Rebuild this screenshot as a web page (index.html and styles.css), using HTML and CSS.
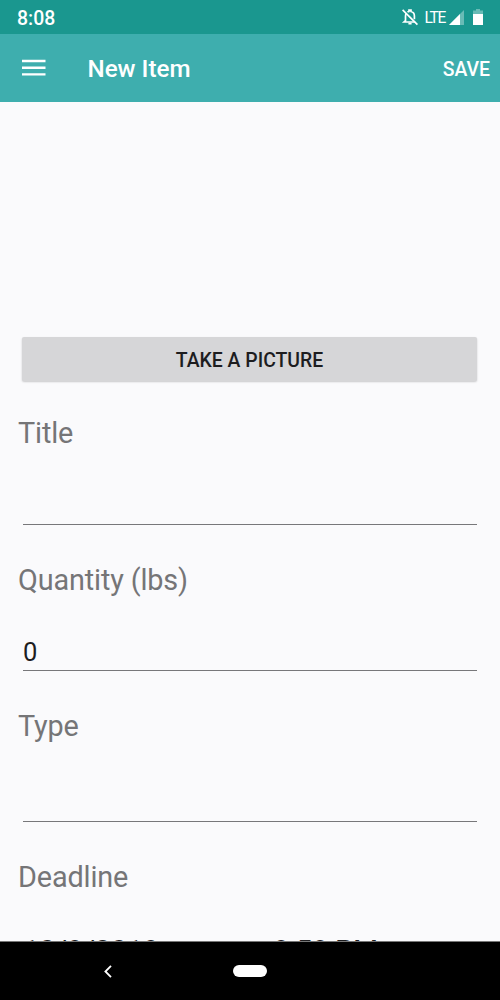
FILE: index.html
```html
<!doctype html>
<html lang="en">
  <head>
    <meta charset="UTF-8" />
    <meta name="viewport" content="width=device-width, initial-scale=1.0" />
    <title>New Item</title>
    <link rel="stylesheet" href="styles.css">
  </head>
  <body>
    <div class="status-bar">
      <span class="clock">8:08</span>
      <div class="status-icons">
        <svg class="bell" width="18" height="18" viewBox="0 0 18 18" fill="none" stroke="#fff" stroke-width="1.7">
          <path d="M5.2 5.5C4.6 6.4 4.5 7.3 4.5 8.3V12.6L3 14H14.2M6.5 4.2C7 3.8 7.5 3.6 8 3.5V2.2H10V3.5C12.2 4 13.4 5.8 13.4 8V11.2" />
          <path d="M1.6 1.8L16.4 16.6" />
          <path d="M7.4 15.6H10.6" stroke-width="1.8" />
        </svg>
        <span class="network">LTE</span>
        <svg class="signal" width="15" height="15" viewBox="0 0 15 15">
          <path d="M15 0V15H0Z" fill="#fff" fill-opacity=".35" />
          <path d="M11 4V15H0Z" fill="#fff" />
        </svg>
        <svg class="battery" width="10" height="16" viewBox="0 0 10 16">
          <path d="M3 0H7V1.6H10V5H0V1.6H3Z" fill="#fff" fill-opacity=".35" />
          <path d="M0 5H10V16H0Z" fill="#fff" />
        </svg>
      </div>
    </div>
    <header class="toolbar">
      <svg class="menu" width="24" height="18" viewBox="0 0 24 18">
        <path d="M0 .8H23.5V3.2H0ZM0 7.5H23.5V9.9H0ZM0 14.2H23.5V16.6H0Z" fill="#fff" />
      </svg>
      <h1>New Item</h1>
      <button class="save">SAVE</button>
    </header>
    <main class="form">
      <button class="picture-button">TAKE A PICTURE</button>
      <div class="field title-field">
        <label for="title">Title</label>
        <input type="text" id="title" />
      </div>
      <div class="field quantity-field">
        <label for="quantity">Quantity (lbs)</label>
        <input type="text" id="quantity" value="0" />
      </div>
      <div class="field type-field">
        <label for="type">Type</label>
        <input type="text" id="type" />
      </div>
      <div class="field">
        <label>Deadline</label>
        <div class="deadline">
          <span>10/8/2018</span>
          <span>8:58 PM</span>
        </div>
      </div>
    </main>
    <nav class="nav-bar">
      <svg class="back" width="8" height="13" viewBox="0 0 8 13" fill="none" stroke="#fff" stroke-width="1.8">
        <path d="M7 .8L1.4 6.5L7 12.2" />
      </svg>
      <div class="home"></div>
    </nav>
  </body>
</html>
```

FILE: styles.css
```css
* {
  box-sizing: border-box;
}
body {
  margin: 0;
  width: 500px;
  height: 1000px;
  display: flex;
  flex-direction: column;
  overflow: hidden;
  font-family: Roboto, sans-serif;
  background-color: #fafafc;
}
button {
  border: none;
  padding: 0;
  font-family: inherit;
  font-weight: 500;
}
.status-bar {
  height: 34px;
  flex-shrink: 0;
  display: flex;
  align-items: center;
  justify-content: space-between;
  padding: 0 17px;
  color: #fff;
  background-color: #1a978f;
}
.clock {
  font-size: 19.4px;
  font-weight: 500;
  line-height: 34px;
  padding-top: 3px;
}
.status-icons {
  display: flex;
  align-items: center;
}
.network {
  font-size: 15.6px;
  line-height: 34px;
  letter-spacing: -1.3px;
  margin: 0 4px 0 5px;
  padding-top: 1px;
}
.battery {
  margin-left: 9px;
}
.toolbar {
  height: 68px;
  flex-shrink: 0;
  display: flex;
  align-items: center;
  padding: 2px 10px 0 22px;
  color: #fff;
  background-color: #3eaeae;
}
.menu {
  margin-bottom: 2px;
}
.toolbar h1 {
  margin: 0 auto 0 41.5px;
  font-size: 24.2px;
  font-weight: 500;
}
.save {
  padding-top: 1px;
  color: #fff;
  background: none;
  font-size: 19.4px;
}
.form {
  height: 839px;
  flex-shrink: 0;
  overflow: hidden;
  padding: 235px 18px 0;
}
.picture-button {
  display: block;
  width: 455px;
  height: 44px;
  margin: 0 4px 34px;
  padding-top: 2px;
  border-radius: 2px;
  color: #1d1d1f;
  background-color: #d6d6d8;
  box-shadow: 0 1px 2px rgba(0, 0, 0, 0.2);
  font-size: 19.4px;
}
.field {
  height: 146px;
}
.title-field {
  height: 147px;
}
.type-field {
  height: 151px;
}
.field label {
  display: block;
  height: 36px;
  line-height: 36px;
  font-size: 28.8px;
  letter-spacing: -0.13px;
  color: #757577;
}
.field input {
  display: block;
  width: 454px;
  height: 74px;
  margin: 0 5px;
  padding: 36px 0 0;
  border: none;
  border-bottom: 1px solid #77777a;
  outline: none;
  background: none;
  font-family: inherit;
  font-size: 25.5px;
  color: #1d1d1f;
}
.quantity-field input {
  height: 73px;
}
.type-field input {
  height: 78px;
}
.deadline {
  display: grid;
  grid-template-columns: 250px 1fr;
  padding: 38px 5px 0;
  font-size: 28.8px;
  letter-spacing: -0.13px;
  line-height: 36px;
  color: #1d1d1f;
}
.nav-bar {
  height: 59px;
  flex-shrink: 0;
  display: flex;
  align-items: center;
  padding-left: 104px;
  border-top: 1px solid #777;
  background-color: #000;
}
.home {
  width: 34px;
  height: 12px;
  margin-left: 121px;
  border-radius: 6px;
  background-color: #fff;
}
```
